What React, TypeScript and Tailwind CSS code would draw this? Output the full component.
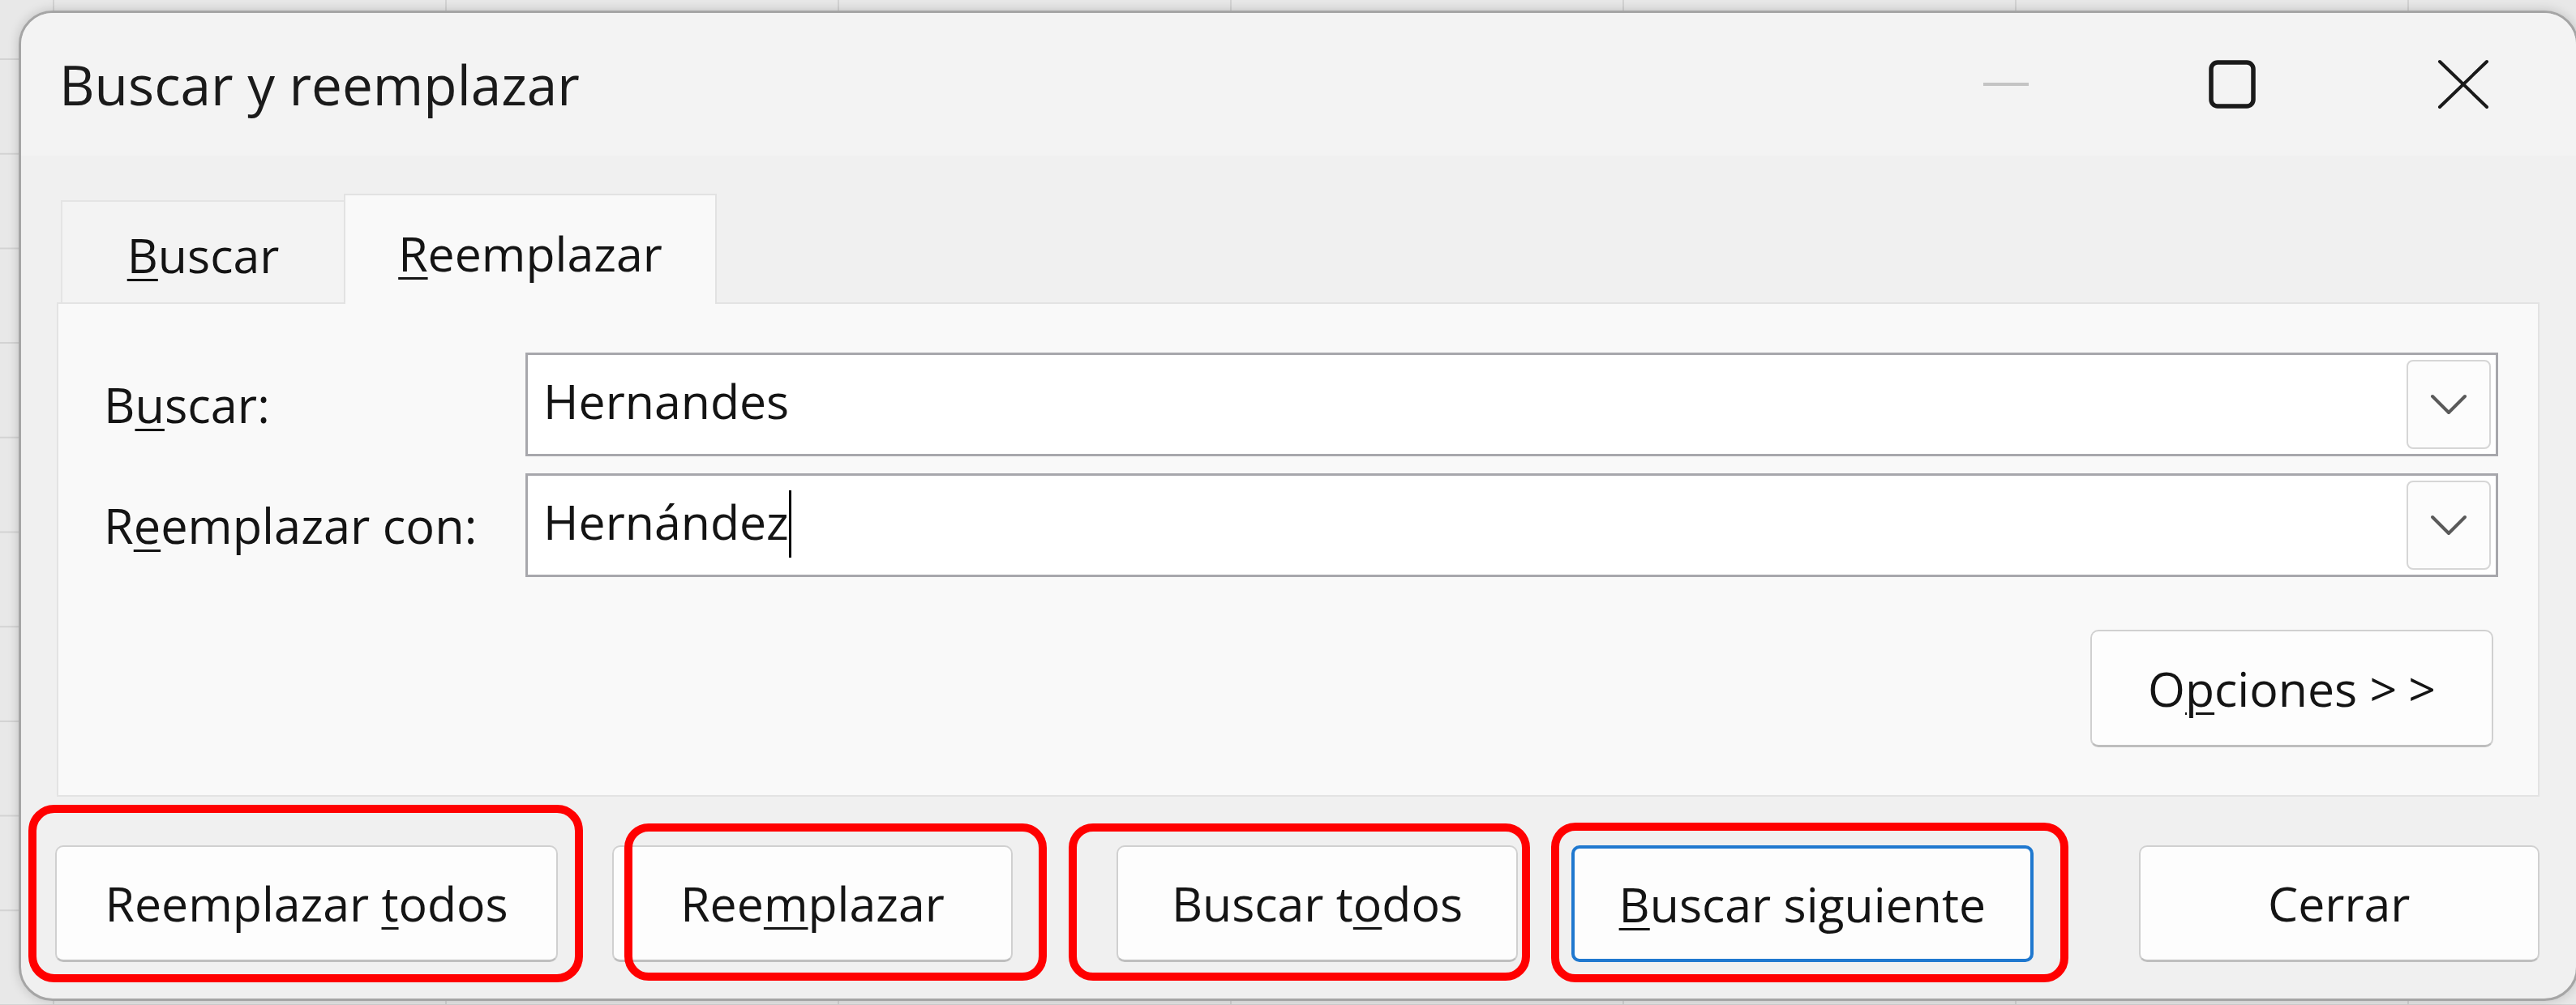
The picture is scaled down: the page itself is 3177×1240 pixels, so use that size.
import React from "react";

function M({ c }: { c: string }) {
  return <span className="underline decoration-[3px] underline-offset-[7px]">{c}</span>;
}

function Chevron() {
  return (
    <svg width="46" height="26" viewBox="0 0 46 26" fill="none">
      <polyline points="3,3 23,23 43,3" stroke="#5a5a5a" strokeWidth="4" strokeLinecap="round" strokeLinejoin="round" />
    </svg>
  );
}

function Field({ children }: { children: React.ReactNode }) {
  return (
    <div className="flex h-[128px] flex-1 items-stretch border-[3px] border-[#a7a7ac] bg-white">
      <div className="flex flex-1 items-center pb-[10px] pl-[19px] text-[59px] leading-[1.2] text-[#141414]">{children}</div>
      <div className="my-[6px] mr-[6px] flex w-[104px] items-center justify-center rounded-[8px] border-2 border-[#d6d6d6] bg-[#fcfcfc]">
        <Chevron />
      </div>
    </div>
  );
}

export default function App() {
  const vlines = [66, 550, 1034, 1518, 2002, 2486, 2970];
  const hlines = Array.from({ length: 11 }, (_, i) => 73 + i * 116.7);
  return (
    <div className="relative h-[1240px] w-[3177px] overflow-hidden bg-[#e8e8e8] pl-[23px] pt-[13px] font-['Open_Sans','Noto_Sans',sans-serif] text-[#141414]">
      <svg className="absolute left-0 top-0" width="3177" height="1240">
        {vlines.map((x) => (
          <line key={"v" + x} x1={x} y1={0} x2={x} y2={1240} stroke="#d3d3d3" strokeWidth="2" />
        ))}
        {hlines.map((y) => (
          <line key={"h" + y} x1={0} y1={y} x2={3177} y2={y} stroke="#d3d3d3" strokeWidth="2" />
        ))}
      </svg>

      <div className="relative flex h-[1222px] w-[3157px] flex-col overflow-hidden rounded-[42px] border-[3px] border-[#a5a5a5] bg-[#f0f0f0] shadow-[0_0_14px_rgba(0,0,0,0.18)]">
        {/* Title bar */}
        <div className="flex h-[176px] items-center bg-[#f3f3f3] pl-[47px] pr-[107px]">
          <div className="text-[67.5px] leading-[1.2] text-[#1a1a1a]">Buscar y reemplazar</div>
          <div className="ml-auto flex items-center">
            <svg width="60" height="60" viewBox="0 0 60 60">
              <line x1="2" y1="30" x2="58" y2="30" stroke="#c4c4c4" strokeWidth="4" />
            </svg>
            <svg className="ml-[219px]" width="60" height="62" viewBox="0 0 60 62">
              <rect x="4" y="4" width="52" height="54" rx="8" fill="none" stroke="#1a1a1a" strokeWidth="5.5" />
            </svg>
            <svg className="ml-[223px]" width="64" height="62" viewBox="0 0 64 62">
              <line x1="3" y1="3" x2="61" y2="59" stroke="#1a1a1a" strokeWidth="4" strokeLinecap="round" />
              <line x1="61" y1="3" x2="3" y2="59" stroke="#1a1a1a" strokeWidth="4" strokeLinecap="round" />
            </svg>
          </div>
        </div>

        {/* Body */}
        <div className="flex flex-1 flex-col pl-[44px] pr-[45px] pt-[47px]">
          <div className="flex h-[134px] items-end pl-[5px]">
            <div className="flex h-[126px] w-[349px] items-center justify-center border-l-2 border-t-2 border-[#e4e4e4] bg-[#f3f3f3] pt-[6px] text-[59px] leading-[1.2]">
              <span>
                <M c="B" />uscar
              </span>
            </div>
            <div className="relative z-10 mb-[-2px] flex h-[136px] w-[460px] items-center justify-center border-x-2 border-t-2 border-[#e2e2e2] bg-[#f9f9f9] pt-[8px] text-[59px] leading-[1.2]">
              <span>
                <M c="R" />eemplazar
              </span>
            </div>
          </div>

          <div className="flex h-[610px] flex-col border-2 border-[#e3e3e3] bg-[#f9f9f9] pl-[56px] pr-[49px] pt-[60px]">
            <div className="flex flex-col gap-[21px]">
              <div className="flex items-center">
                <div className="w-[520px] text-[59.5px] leading-[1.2]">
                  B<M c="u" />scar:
                </div>
                <Field>Hernandes</Field>
              </div>
              <div className="flex items-center">
                <div className="w-[520px] text-[59.5px] leading-[1.2]">
                  R<M c="e" />emplazar con:
                </div>
                <Field>
                  <span>Hernández</span>
                  <span className="mt-[6px] inline-block h-[83px] w-[3px] bg-black" />
                </Field>
              </div>
            </div>
            <div className="mt-[65px] flex justify-end pr-[6px]">
              <div className="flex h-[145px] w-[497px] items-center justify-center rounded-[10px] border-2 border-b-[3px] border-[#d0d0d0] border-b-[#bebebe] bg-[#fdfdfd] text-[59px] leading-[1.2]">
                <span>
                  O<M c="p" />ciones &gt;<span className="ml-[14px]">&gt;</span>
                </span>
              </div>
            </div>
          </div>

          <div className="ml-[-2px] mt-[60px] flex h-[144px] text-[59px] leading-[1.2]">
            <div className="flex h-[144px] w-[621px] items-center justify-center rounded-[10px] border-2 border-b-[3px] border-[#d0d0d0] border-b-[#bebebe] bg-[#fdfdfd]">
              <span>
                Reemplazar <M c="t" />odos
              </span>
            </div>
            <div className="ml-[67px] flex h-[144px] w-[494px] items-center justify-center rounded-[10px] border-2 border-b-[3px] border-[#d0d0d0] border-b-[#bebebe] bg-[#fdfdfd]">
              <span>
                Ree<M c="m" />plazar
              </span>
            </div>
            <div className="ml-[128px] flex h-[144px] w-[496px] items-center justify-center rounded-[10px] border-2 border-b-[3px] border-[#d0d0d0] border-b-[#bebebe] bg-[#fdfdfd]">
              <span>
                Buscar t<M c="o" />dos
              </span>
            </div>
            <div className="ml-[66px] flex h-[144px] w-[570px] items-center justify-center rounded-[10px] border-[4px] border-[#1f78cf] bg-[#fdfdfd]">
              <span>
                <M c="B" />uscar siguiente
              </span>
            </div>
            <div className="ml-[130px] flex h-[144px] w-[495px] items-center justify-center rounded-[10px] border-2 border-b-[3px] border-[#d0d0d0] border-b-[#bebebe] bg-[#fdfdfd]">
              <span>Cerrar</span>
            </div>
          </div>
        </div>
      </div>

      {/* Red annotation highlights */}
      <div className="absolute left-[35px] top-[993px] h-[219px] w-[684px] rounded-[32px] border-[10px] border-[#ff0000]" />
      <div className="absolute left-[770px] top-[1016px] h-[194px] w-[521px] rounded-[30px] border-[10px] border-[#ff0000]" />
      <div className="absolute left-[1318px] top-[1016px] h-[194px] w-[569px] rounded-[30px] border-[10px] border-[#ff0000]" />
      <div className="absolute left-[1913px] top-[1015px] h-[197px] w-[638px] rounded-[30px] border-[10px] border-[#ff0000]" />
    </div>
  );
}
